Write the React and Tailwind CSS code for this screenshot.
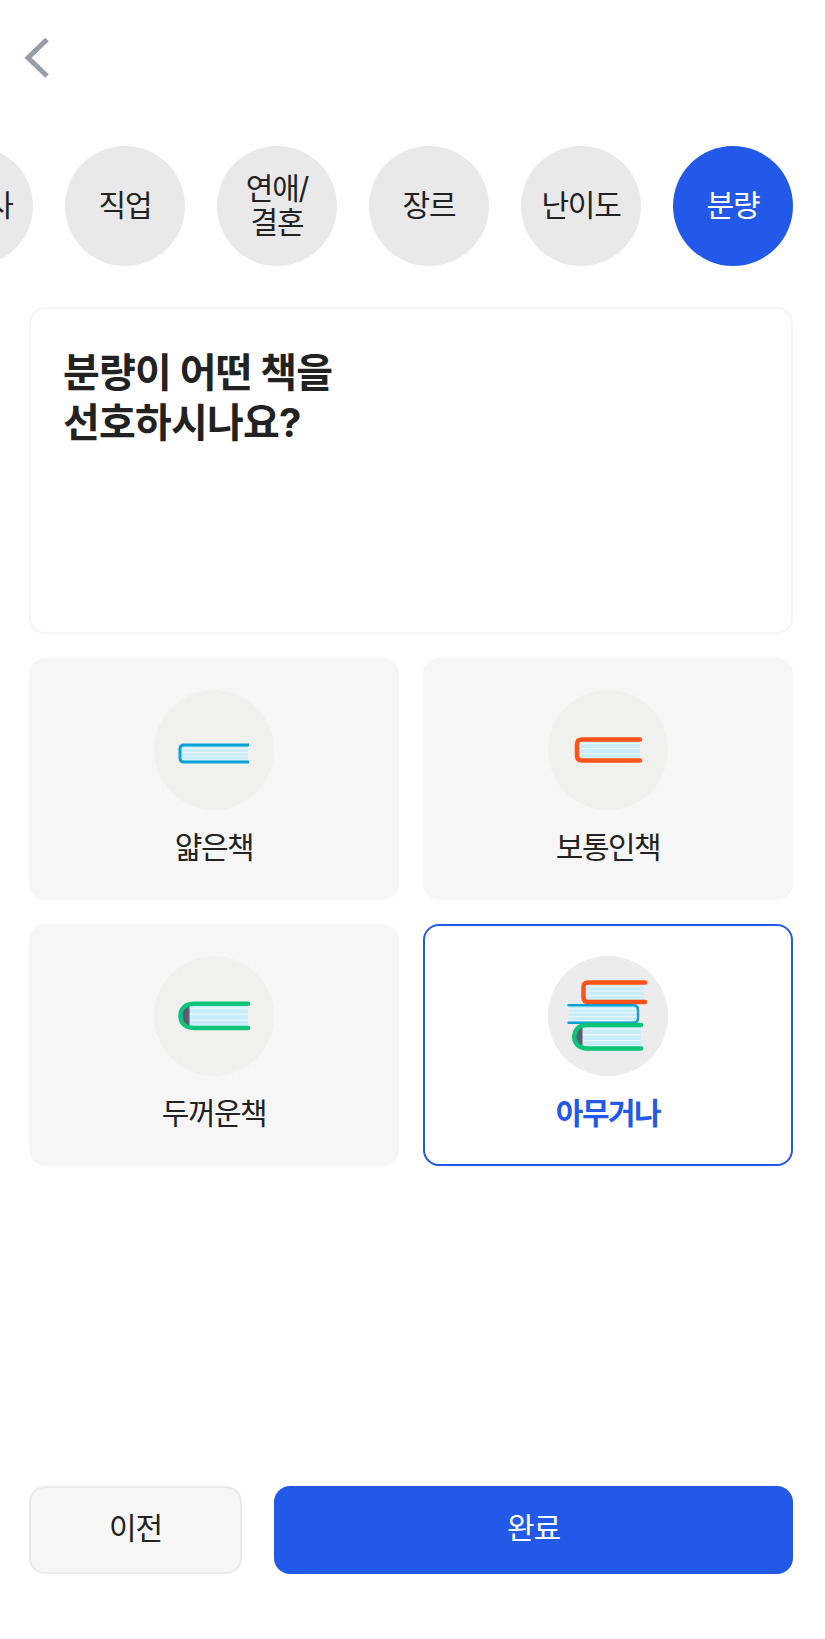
import React from 'react';

const categories = [
    { id: 'history', label: '세계사' },
    { id: 'job', label: '직업' },
    { id: 'love', label: <>연애/<br />결혼</> },
    { id: 'genre', label: '장르' },
    { id: 'level', label: '난이도' },
    { id: 'size', label: '분량', active: true },
];

// pages block shared by all the books
const Pages = ({ x, y, w, h }) => {
    const rows = 4;
    return (
        <g>
            <rect x={x} y={y} width={w} height={h} fill="#c8ecfa" />
            {Array.from({ length: rows }).map((_, i) => (
                <rect key={i} x={x} y={y + ((i + 0.7) * h) / rows - 0.5} width={w} height="1" fill="#eefafe" />
            ))}
        </g>
    );
};

const ThinBook = () => (
    <svg viewBox="0 0 120 120" className="w-[120px] h-[120px]">
        <Pages x={28} y={56} w={66} h={15} />
        <path d="M95 55 H30 Q26 55 26 59 V68 Q26 72 30 72 H95" fill="none" stroke="#0ba2d6" strokeWidth="3" />
    </svg>
);

const MediumBook = () => (
    <svg viewBox="0 0 120 120" className="w-[120px] h-[120px]">
        <Pages x={33} y={50} w={59} h={20} />
        <path d="M92 49.500 H34 Q29 49.500 29 54.500 V65.500 Q29 70.500 34 70.500 H92" fill="none" stroke="#ff5219" strokeWidth="4.500" strokeLinecap="round" />
    </svg>
);

const ThickBook = () => (
    <svg viewBox="0 0 120 120" className="w-[120px] h-[120px]">
        <Pages x={35} y={48} w={59} h={24} />
        <path d="M35.500 48 Q27 50 27 60 Q27 70 35.500 72 Z" fill="#5d5a72" />
        <path d="M94 47.800 H40 C31 47.800 26.500 53 26.500 59.900 C26.500 66.800 31 71.900 40 71.900 H94" fill="none" stroke="#0cc477" strokeWidth="4.500" strokeLinecap="round" />
    </svg>
);

const StackBooks = () => (
    <svg viewBox="0 0 120 120" className="w-[120px] h-[120px]">
        <Pages x={37} y={27} w={59} h={19} />
        <path d="M97 26.500 H40 Q35.500 26.500 35.500 31 V41.500 Q35.500 46 40 46 H97" fill="none" stroke="#ff5219" strokeWidth="4.500" strokeLinecap="round" />
        <Pages x={21} y={50} w={67} h={16} />
        <path d="M20.500 49.300 H85 Q90 49.300 90 54 V62 Q90 66.700 85 66.700 H20.500" fill="none" stroke="#0ba2d6" strokeWidth="2.400" strokeLinecap="round" />
        <Pages x={34} y={69} w={59} h={23} />
        <path d="M34.500 70 Q27 72 27 80.700 Q27 89.500 34.500 91.500 Z" fill="#5d5a72" />
        <path d="M93 69 H39 C30.500 69 26.300 74.500 26.300 80.700 C26.300 87 30.500 92.400 39 92.400 H93" fill="none" stroke="#0cc477" strokeWidth="4.500" strokeLinecap="round" />
    </svg>
);

const options = [
    { id: 'thin', label: '얇은책', Icon: ThinBook },
    { id: 'normal', label: '보통인책', Icon: MediumBook },
    { id: 'thick', label: '두꺼운책', Icon: ThickBook },
    { id: 'any', label: '아무거나', Icon: StackBooks, selected: true },
];

const App = () => (
    <div className="w-[825px] h-[1639px] bg-white overflow-hidden text-[#222222] font-['Inter','Noto_Sans_CJK_KR',sans-serif]">
        <header className="h-[146px] pl-[23px] pt-[36px]">
            <svg width="28" height="44" viewBox="0 0 28 44" fill="none">
                <path d="M24 3.500 L5 21.800 L24 40" stroke="#979dab" strokeWidth="5" />
            </svg>
        </header>

        <div className="flex justify-end gap-[32px] pr-[32px] overflow-hidden">
            {categories.map((c) => (
                <div
                    key={c.id}
                    className={`w-[120px] h-[120px] shrink-0 rounded-full flex items-center justify-center pb-[2px] text-[30px] leading-[34px] tracking-[-1.200px] text-center ${c.active ? 'bg-[#2359e8] text-white' : 'bg-[#e9e9e9]'}`}
                >
                    <span>{c.label}</span>
                </div>
            ))}
        </div>

        <main className="pl-[29px] pr-[32px] pt-[41px]">
            <section className="h-[327px] rounded-[16px] border-2 border-[#f5f5f5] pl-[32px] pt-[39px]">
                <h1 className="text-[40px] leading-[50px] font-bold tracking-[-0.800px]">
                    분량이 어떤 책을<br />선호하시나요?
                </h1>
            </section>

            <div className="grid grid-cols-2 gap-[24px] mt-[24px]">
                {options.map(({ id, label, Icon, selected }) => (
                    <div
                        key={id}
                        className={`h-[242px] rounded-[16px] flex flex-col items-center pt-[30px] ${selected ? 'bg-white border-2 border-[#2359e8]' : 'bg-[#f6f6f6] border-2 border-[#f6f6f6]'}`}
                    >
                        <div className={`w-[120px] h-[120px] rounded-full ${selected ? 'bg-[#ececec]' : 'bg-[#f0f0ee]'}`}>
                            <Icon />
                        </div>
                        <p className={`mt-[15px] text-[30px] leading-[44px] tracking-[-1.500px] ${selected ? 'text-[#2359e8] font-semibold' : ''}`}>
                            {label}
                        </p>
                    </div>
                ))}
            </div>
        </main>

        <footer className="flex gap-[32px] pl-[29px] pr-[32px] mt-[320px]">
            <button className="w-[213px] h-[88px] pb-[3px] rounded-[16px] bg-[#f6f6f6] border-2 border-[#eaeaea] text-[30px] tracking-[-1.200px]">
                이전
            </button>
            <button className="flex-1 h-[88px] pb-[3px] rounded-[16px] bg-[#2359e8] text-white text-[30px] tracking-[-1.200px]">
                완료
            </button>
        </footer>
    </div>
);

export default App;
